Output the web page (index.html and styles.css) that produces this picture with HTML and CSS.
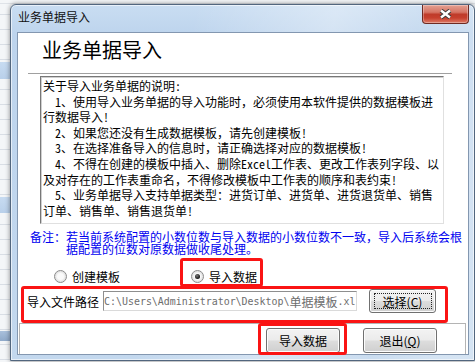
FILE: index.html
```html
<!DOCTYPE html>
<html lang="zh-CN">
<head>
<meta charset="utf-8">
<title>业务单据导入</title>
<link rel="stylesheet" href="styles.css">
</head>
<body>
<div class="desktop">
  <div class="window">
    <div class="titlebar">
      <span class="title">业务单据导入</span>
      <div class="close">
        <svg width="13" height="10" viewBox="0 0 13 10">
          <path d="M2 1.5 L11 8.5 M11 1.5 L2 8.5" stroke="#3b3b3b" stroke-width="4.4" fill="none"/>
          <path d="M2 1.5 L11 8.5 M11 1.5 L2 8.5" stroke="#ffffff" stroke-width="2.4" fill="none"/>
        </svg>
      </div>
    </div>
    <div class="client">
      <div class="header">业务单据导入</div>
      <div class="sep"></div>
      <div class="memo"><div>关于导入业务单据的说明:</div><div><span class="ind"></span>1、使用导入业务单据的导入功能时，必须使用本软件提供的数据模板进</div><div>行数据导入!</div><div><span class="ind"></span>2、如果您还没有生成数据模板，请先创建模板!</div><div><span class="ind"></span>3、在选择准备导入的信息时，请正确选择对应的数据模板!</div><div><span class="ind"></span>4、不得在创建的模板中插入、删除Excel工作表、更改工作表列字段、以</div><div>及对存在的工作表重命名，不得修改模板中工作表的顺序和表约束!</div><div><span class="ind"></span>5、业务单据导入支持单据类型：进货订单、进货单、进货退货单、销售</div><div>订单、销售单、销售退货单!</div></div>
      <div class="note">
        <div class="note-label">备注：</div>
        <div class="note-text">
          <div class="note-line">若当前系统配置的小数位数与导入数据的小数位数不一致，导入后系统会根</div>
          <div class="note-line">据配置的位数对原数据做收尾处理。</div>
        </div>
      </div>
      <div class="radios">
        <div class="radio"><span class="circle"></span><span>创建模板</span></div>
        <div class="radio"><span class="circle checked"><span class="dot"></span></span><span>导入数据</span></div>
      </div>
      <div class="filerow">
        <span class="flabel">导入文件路径</span>
        <div class="input"><span class="mono">C:\Users\Administrator\Desktop\</span><span class="cjk">单据模板</span><span class="mono">.xl</span></div>
        <div class="btn choose focus">选择(<u>C</u>)</div>
      </div>
      <div class="panel">
        <div class="btn big">导入数据</div>
        <div class="btn big">退出(<u>Q</u>)</div>
      </div>
    </div>
  </div>
  <div class="mark mark-radio"></div>
  <div class="mark mark-file"></div>
  <div class="mark mark-import"></div>
</div>
</body>
</html>
```
FILE: styles.css
```css
* { box-sizing: border-box; }
html, body { margin: 0; padding: 0; }
body {
  width: 475px;
  height: 362px;
  overflow: hidden;
  font-family: "Noto Sans CJK SC", sans-serif;
  font-size: 12px;
  color: #000;
}

.desktop {
  position: relative;
  width: 475px;
  height: 362px;
  padding: 4px 0 0 10px;
  background:
    linear-gradient(#c7dbf1, #b9d0ea) 0 62px / 10px 17px no-repeat,
    linear-gradient(#c7dbf1, #b9d0ea) 0 197px / 10px 16px no-repeat,
    linear-gradient(#a9c0dc, #8fa9c9) 0 331px / 10px 10px no-repeat,
    linear-gradient(#dfe3e8, #dfe3e8) 0 3px / 475px 1px no-repeat,
    repeating-linear-gradient(to bottom, #f4f6f8 0 14px, #d9dee5 14px 15px);
}

/* window frame */
.window {
  width: 465px;
  height: 357px;
  border: 1px solid #52667e;
  border-radius: 6px 6px 0 0;
  padding: 0 5px 5px 6px;
  display: flex;
  flex-direction: column;
  background:
    linear-gradient(100deg, rgba(255,255,255,0) 35%, rgba(255,255,255,0.35) 62%, rgba(255,255,255,0.12) 80%, rgba(255,255,255,0.3) 92%),
    linear-gradient(180deg, #c9ddf2 0, #bdd4ed 30px, #c3d8ee 100%);
  box-shadow: 0 0 5px rgba(0,0,0,0.45), inset 0 0 0 1px rgba(255,255,255,0.6);
}

.titlebar {
  height: 27px;
  display: flex;
  align-items: flex-start;
}
.title {
  flex: 1;
  line-height: 24px;
  padding-left: 1px;
  color: #111;
  font-size: 12px;
}
.close {
  width: 47px;
  height: 19px;
  display: flex;
  align-items: center;
  justify-content: center;
  border: 1px solid #6e2a22;
  border-top: none;
  border-radius: 0 0 4px 4px;
  background: linear-gradient(180deg, #e3a092 0%, #d67565 40%, #bf3b2a 52%, #c7402e 72%, #de7a66 100%);
  box-shadow: inset 0 0 0 1px rgba(255,255,255,0.3);
}

.client {
  flex: 1;
  background: #fff;
  border: 1px solid #8397b0;
  display: flex;
  flex-direction: column;
}

.header {
  font-size: 20px;
  line-height: 24px;
  margin-top: 5px;
  padding-left: 24px;
}
.sep {
  margin: 11px 0 0 10px;
  width: 424px;
  border-top: 1px solid #a0a0a0;
  border-bottom: 1px solid #fff;
}

.memo {
  margin: 1px 0 0 22px;
  width: 404px;
  height: 148px;
  border: 1px solid;
  border-color: #777 #e0e0e0 #e0e0e0 #777;
  box-shadow: inset 1px 1px 0 #cfcfcf;
  padding: 1px 0 0 2px;
  font-family: "Noto Sans Mono CJK SC", "Noto Sans CJK SC", sans-serif;
  font-size: 12px;
  line-height: 15.6px;
  white-space: pre;
  overflow: hidden;
}
.ind {
  display: inline-block;
  width: 12px;
}

.note {
  display: flex;
  margin: 7px 0 0 12px;
  color: #0000f0;
  line-height: 12px;
}
.note-line {
  height: 12px;
  white-space: nowrap;
}

.radios {
  display: flex;
  align-items: center;
  height: 20px;
  margin-top: 11px;
  padding-left: 36px;
}
.radio {
  display: flex;
  align-items: center;
  gap: 5px;
}
.radio + .radio { margin-left: 71px; }
.circle {
  width: 13px;
  height: 13px;
  border-radius: 50%;
  border: 1px solid #8a8a8a;
  background: radial-gradient(circle at 50% 50%, #fafafa 0 3px, #e4e4e4 5px, #f2f2f2 6px);
  display: flex;
  align-items: center;
  justify-content: center;
}
.dot {
  width: 5px;
  height: 5px;
  border-radius: 50%;
  background: radial-gradient(circle at 40% 35%, #7a7a7a, #151515 70%);
}

.filerow {
  display: flex;
  align-items: center;
  height: 24px;
  margin-top: 3px;
  padding-left: 9px;
}
.flabel {
  width: 72px;
  white-space: nowrap;
}
.input {
  margin-left: 4px;
  width: 254px;
  height: 20px;
  border: 1px solid;
  border-color: #8e8e8e #dadada #dadada #8e8e8e;
  padding-left: 0;
  display: flex;
  align-items: center;
  overflow: hidden;
  white-space: nowrap;
  color: #6d6d6d;
}
.mono {
  font-family: "DejaVu Sans Mono", monospace;
  font-size: 9.95px;
  flex: none;
}
.cjk {
  font-size: 12px;
  flex: none;
}

.btn {
  display: flex;
  align-items: center;
  justify-content: center;
  border: 1px solid #707070;
  border-radius: 3px;
  background: linear-gradient(180deg, #f3f3f3 0%, #ebebeb 48%, #dddddd 52%, #cfcfcf 100%);
  box-shadow: inset 0 0 0 1px #fcfcfc;
  font-size: 12px;
  white-space: nowrap;
}
.btn u { text-decoration: underline; text-underline-offset: 1px; }
.choose {
  margin-left: 12px;
  width: 67px;
  height: 24px;
  position: relative;
}
.focus::before {
  content: "";
  position: absolute;
  inset: 3px 3px 3px 4px;
  border: 1px dotted #222;
}

.panel {
  flex: 1;
  margin: 10px 0 0 1px;
  width: 447px;
  border: 1px solid #b4b4b4;
  border-bottom: none;
  display: flex;
  align-items: flex-start;
  gap: 23px;
  padding: 4px 0 0 246px;
}
.big {
  width: 74px;
  height: 25px;
}

/* red annotation boxes */
.mark {
  position: absolute;
  border: 3px solid #fa1414;
  border-radius: 3px;
}
.mark-radio { left: 180px; top: 258px; width: 83px; height: 29px; }
.mark-file { left: 21px; top: 286px; width: 427px; height: 37px; }
.mark-import { left: 258px; top: 323px; width: 89px; height: 32px; }
```
